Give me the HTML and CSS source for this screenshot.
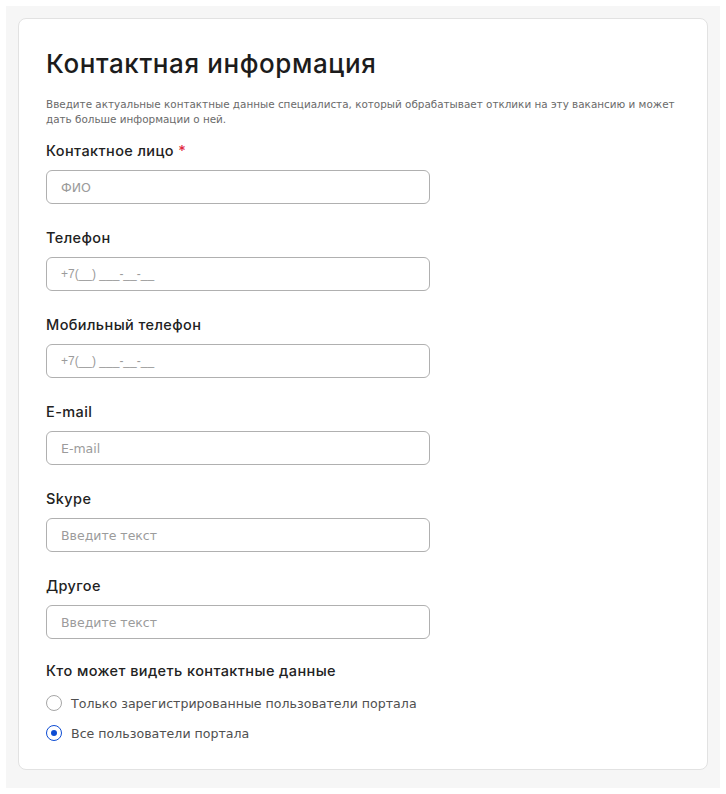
FILE: index.html
```html
<!DOCTYPE html>
<html lang="ru">
<head>
<meta charset="utf-8">
<link rel="stylesheet" href="styles.css">
</head>
<body>
<div class="page">
  <section class="card">
    <h1 class="title">Контактная информация</h1>
    <p class="desc">Введите актуальные контактные данные специалиста, который обрабатывает отклики на эту вакансию и может дать больше информации о ней.</p>

    <div class="field">
      <label class="label">Контактное лицо <span class="req">*</span></label>
      <div class="input"><span class="ph">ФИО</span></div>
    </div>
    <div class="field">
      <label class="label">Телефон</label>
      <div class="input"><span class="ph mask">+7(__) ___-__-__</span></div>
    </div>
    <div class="field">
      <label class="label">Мобильный телефон</label>
      <div class="input"><span class="ph mask">+7(__) ___-__-__</span></div>
    </div>
    <div class="field">
      <label class="label">E-mail</label>
      <div class="input"><span class="ph">E-mail</span></div>
    </div>
    <div class="field">
      <label class="label">Skype</label>
      <div class="input"><span class="ph">Введите текст</span></div>
    </div>
    <div class="field">
      <label class="label">Другое</label>
      <div class="input"><span class="ph">Введите текст</span></div>
    </div>

    <div class="radios">
      <div class="label">Кто может видеть контактные данные</div>
      <div class="radio"><span class="circle"></span><span class="rtext">Только зарегистрированные пользователи портала</span></div>
      <div class="radio"><span class="circle checked"></span><span class="rtext">Все пользователи портала</span></div>
    </div>
  </section>
</div>
</body>
</html>
```

FILE: styles.css
```css
* { box-sizing: border-box; }
html, body { margin: 0; padding: 0; background: #ffffff; }
body {
  font-family: "DejaVu Sans", "Noto Sans", sans-serif;
  color: #222222;
}
.page {
  margin: 6px;
  width: 714px;
  height: 782px;
  background: #f6f6f6;
  padding: 12px;
}
.card {
  width: 690px;
  background: #ffffff;
  border: 1px solid #e2e2e2;
  border-radius: 8px;
  padding: 29px 27px 26px 27px;
  display: flex;
  flex-direction: column;
}
.title {
  margin: 0;
  font-family: "Inter", "DejaVu Sans", sans-serif;
  font-size: 26px;
  line-height: 32px;
  font-weight: 500;
  letter-spacing: 0.6px;
  color: #1c1c1c;
}
.desc {
  margin: 17px 0 0 0;
  font-size: 10.4px;
  line-height: 15px;
  color: #6a6a6a;
  max-width: 640px;
}
.field {
  display: flex;
  flex-direction: column;
  gap: 9px;
  margin-top: 24px;
}
.field:first-of-type { margin-top: 14px; }
.label {
  display: block;
  font-family: "Inter", "DejaVu Sans", sans-serif;
  font-size: 14.5px;
  line-height: 20px;
  font-weight: 500;
  letter-spacing: 0.4px;
  color: #222222;
}
.req { color: #e0263c; }
.input {
  width: 384px;
  height: 34px;
  border: 1px solid #b0b0b0;
  border-radius: 6px;
  padding: 0 14px;
  display: flex;
  align-items: center;
}
.ph {
  font-size: 12.5px;
  color: #9b9b9b;
}
.mask {
  font-family: "Liberation Sans", sans-serif;
  font-size: 12px;
}
.radios {
  margin-top: 22px;
  display: flex;
  flex-direction: column;
}
.radio {
  display: flex;
  align-items: center;
  gap: 9px;
  height: 20px;
  margin-top: 10px;
}
.radios .label + .radio { margin-top: 12px; }
.circle {
  width: 16px;
  height: 16px;
  border-radius: 50%;
  border: 1.5px solid #a6a6a6;
  display: flex;
  align-items: center;
  justify-content: center;
}
.circle.checked { border-color: #0d4cd3; }
.circle.checked::after {
  content: "";
  width: 6px;
  height: 6px;
  border-radius: 50%;
  background: #0d4cd3;
}
.rtext {
  font-size: 12.6px;
  color: #505050;
}
```
